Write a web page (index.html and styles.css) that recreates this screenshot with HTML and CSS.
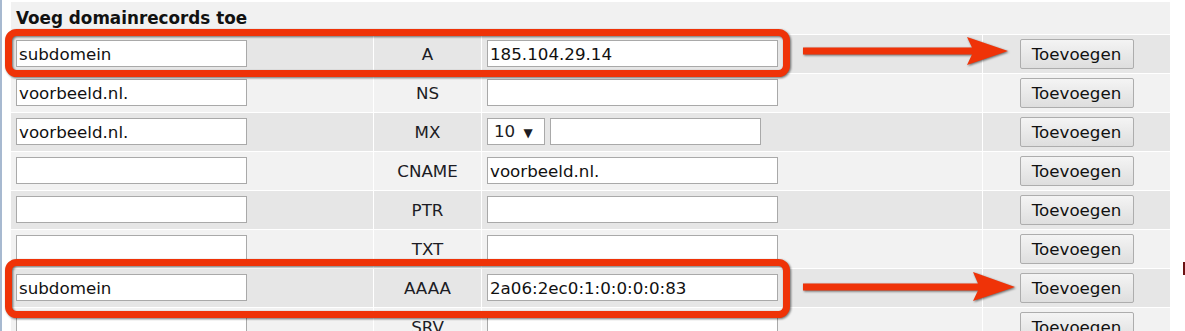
FILE: index.html
```html
<!DOCTYPE html>
<html lang="nl">
<head>
  <meta charset="UTF-8" />
  <title>Domainrecords</title>
  <link rel="stylesheet" href="styles.css">
</head>
<body>
  <div class="page">
    <table class="records">
      <tr>
        <th colspan="4" class="title">Voeg domainrecords toe</th>
      </tr>
      <tr class="dark">
        <td class="name"><input type="text" value="subdomein" /></td>
        <td class="type">A</td>
        <td class="value"><input type="text" value="185.104.29.14" /></td>
        <td class="action"><button>Toevoegen</button></td>
      </tr>
      <tr class="light">
        <td class="name"><input type="text" value="voorbeeld.nl." /></td>
        <td class="type">NS</td>
        <td class="value"><input type="text" value="" /></td>
        <td class="action"><button>Toevoegen</button></td>
      </tr>
      <tr class="dark">
        <td class="name"><input type="text" value="voorbeeld.nl." /></td>
        <td class="type">MX</td>
        <td class="value">
          <div class="mx">
            <span class="prio">10 <span class="caret">&#9660;</span></span>
            <input type="text" class="mx-host" value="" />
          </div>
        </td>
        <td class="action"><button>Toevoegen</button></td>
      </tr>
      <tr class="light">
        <td class="name"><input type="text" value="" /></td>
        <td class="type">CNAME</td>
        <td class="value"><input type="text" value="voorbeeld.nl." /></td>
        <td class="action"><button>Toevoegen</button></td>
      </tr>
      <tr class="dark">
        <td class="name"><input type="text" value="" /></td>
        <td class="type">PTR</td>
        <td class="value"><input type="text" value="" /></td>
        <td class="action"><button>Toevoegen</button></td>
      </tr>
      <tr class="light">
        <td class="name"><input type="text" value="" /></td>
        <td class="type">TXT</td>
        <td class="value"><input type="text" value="" /></td>
        <td class="action"><button>Toevoegen</button></td>
      </tr>
      <tr class="dark">
        <td class="name"><input type="text" value="subdomein" /></td>
        <td class="type">AAAA</td>
        <td class="value"><input type="text" value="2a06:2ec0:1:0:0:0:0:83" /></td>
        <td class="action"><button>Toevoegen</button></td>
      </tr>
      <tr class="light">
        <td class="name"><input type="text" value="" /></td>
        <td class="type">SRV</td>
        <td class="value"><input type="text" value="" /></td>
        <td class="action"><button>Toevoegen</button></td>
      </tr>
    </table>
    <span class="edge-mark"></span>
  </div>

  <!-- annotation overlay: red boxes and arrows -->
  <svg class="marks" width="1185" height="331" viewBox="0 0 1185 331">
    <g fill="none" stroke="#ef3308" stroke-width="7">
      <rect x="8.5" y="32.5" width="778" height="41" rx="8" />
      <rect x="8.5" y="262.5" width="778" height="52" rx="8" />
    </g>
    <g fill="#ef3308">
      <path d="M803 47.5 H972 L967 37 L1008 51 L967 65 L972 54.5 H803 Z" />
      <path d="M803 283.5 H978 L973 272 L1015 287 L973 301 L978 290.5 H803 Z" />
    </g>
  </svg>
</body>
</html>
```

FILE: styles.css
```css
/* Base */
* {
  box-sizing: border-box;
}

body {
  margin: 0;
  background: #fff;
  font-family: 'DejaVu Sans', Verdana, sans-serif;
  color: #1c1c24;
  overflow: hidden;
}

.page {
  display: flex;
  align-items: flex-start;
  height: 331px;
  border-left: 2px solid #a7b9d0;
  padding-left: 8px;
  padding-top: 1px;
}

/* Table */
.records {
  border-collapse: separate;
  border-spacing: 1px;
  background: #fff;
  font-size: 16.7px;
}

.records th,
.records td {
  padding: 0;
}

.title {
  height: 32px;
  background: #f1f1f1;
  text-align: left;
  padding-left: 5px !important;
  font-size: 16.8px;
  font-weight: bold;
  color: #111;
}

.records tr.dark td {
  background: #e6e6e6;
}

.records tr.light td {
  background: #f2f2f2;
}

.records td {
  height: 38px;
  vertical-align: top;
}

.name {
  width: 362px;
  padding: 5px 0 0 5px !important;
}

.type {
  width: 107px;
  text-align: center;
  vertical-align: middle !important;
  line-height: 38px;
}

.value {
  width: 500px;
  padding: 5px 0 0 5px !important;
}

.action {
  width: 187px;
  text-align: center;
  padding-top: 4px !important;
}

/* Controls */
input {
  height: 27px;
  border: 1px solid #a9a9a9;
  background: #fff;
  padding: 0 2px;
  font-family: 'DejaVu Sans', Verdana, sans-serif;
  font-size: 16.7px;
  color: #111;
  margin: 0;
}

.name input {
  width: 231px;
}

.value input {
  width: 291px;
}

.mx {
  display: flex;
  gap: 5px;
}

.mx .prio {
  width: 58px;
  height: 27px;
  border: 1px solid #a9a9a9;
  background: #fff;
  padding-left: 6px;
  line-height: 25px;
  font-size: 16.7px;
}

.mx .caret {
  font-size: 12px;
  margin-left: 3px;
}

.value .mx-host {
  width: 211px;
}

button {
  width: 114px;
  height: 30px;
  border: 1px solid #adadad;
  border-radius: 2px;
  background: linear-gradient(#f4f4f4, #dedede);
  font-family: 'DejaVu Sans', Verdana, sans-serif;
  font-size: 16.7px;
  color: #111;
  padding: 0;
}

.edge-mark {
  width: 2px;
  height: 13px;
  margin-top: 261px;
  margin-left: 12px;
  background: #6b1212;
}

/* Annotation overlay */
.marks {
  position: absolute;
  top: 0;
  left: 0;
  filter: drop-shadow(1px 1.5px 0.8px rgba(0, 0, 0, 0.55));
}
```
